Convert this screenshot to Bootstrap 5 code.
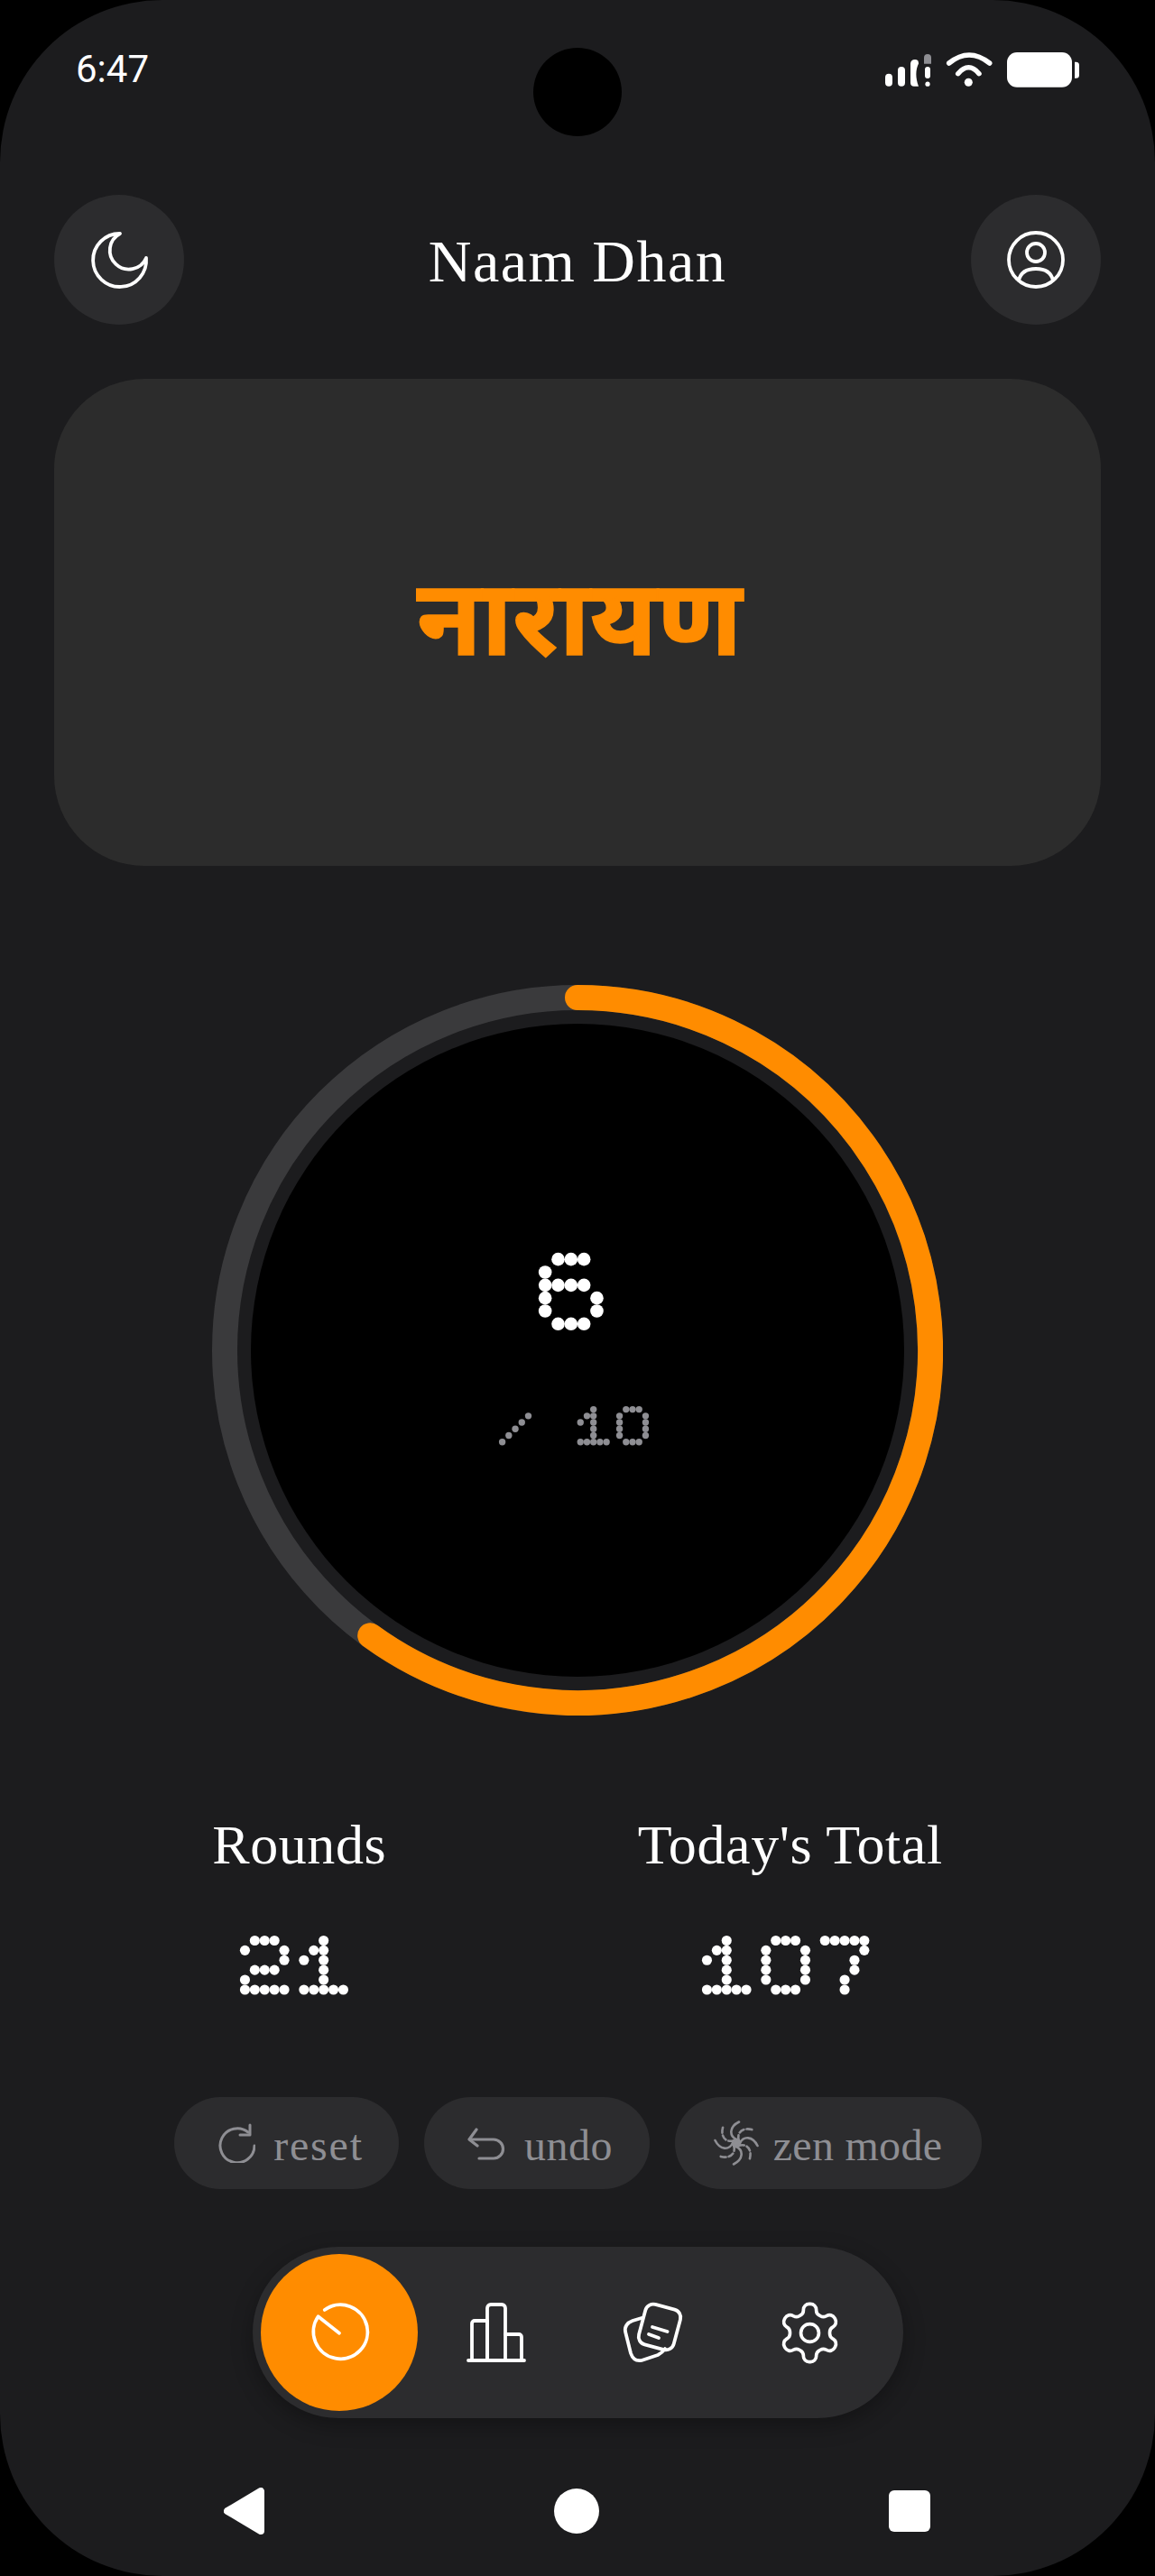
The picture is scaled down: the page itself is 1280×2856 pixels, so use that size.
<!doctype html>
<html lang="en">
<head>
<meta charset="utf-8">
<title>Naam Dhan</title>
<link href="https://cdn.jsdelivr.net/npm/bootstrap@5.3.0/dist/css/bootstrap.min.css" rel="stylesheet">
<style>
html,body{background:#000;margin:0;height:2856px;overflow:hidden}
.phone{width:1280px;height:2856px;background:#1c1c1e;border-radius:180px;color:#fff;font-family:"Liberation Serif","DejaVu Serif",serif}
.camera{position:absolute;left:591px;top:53px;width:98px;height:98px;border-radius:50%;background:#000}
.statusrow{height:216px;padding:50px 84px 0}
.clock{font:42px/54px Roboto,sans-serif;width:90px}
.status-icons{margin:8px -1px 0 0}
.head-row{padding:0 60px}
.roundbtn{width:144px;height:144px;background:#2c2c2e;border:0;padding:0}
.head-title{font-size:66px;line-height:72px;letter-spacing:1.5px;margin-top:3px}
.word-card{height:540px;margin:60px 60px 0;padding:0 0 19px 4px;background:#2c2c2c;border-radius:100px;color:#ff8c00;font-family:"Noto Sans","DejaVu Sans",sans-serif;font-size:117px;font-weight:700;-webkit-text-stroke:1.5px #ff8c00}
.dial{width:810px;height:810px;margin:132px auto 0}
.dial svg{display:block}
.dial-num{position:absolute;inset:0;padding-top:297px}
.dial-sub{margin-top:84px}
.stats{margin-top:109px;padding:0 96px}
.stat-label{font-size:62px;line-height:68px;letter-spacing:.6px}
.stat-val{margin-top:67px;height:66px}
.pills{margin-top:113px;gap:28px}
.pill-btn{height:102px;border-radius:51px;background:#2c2c2e;color:#8e8e93;font-size:48px;line-height:1;padding:0;border:0}
.pill-txt{padding-top:6px}
.w-reset{width:249px;gap:20px;letter-spacing:1.800px;padding-left:8px}.w-undo{width:250px;gap:19px;letter-spacing:.5px;padding-left:8px}.w-zen{width:340px;gap:16px;letter-spacing:.3px}
.dock{width:721px;height:190px;margin-top:64px;padding:10px 15px 10px 9px;background:#2c2c2e;border-radius:95px;box-shadow:0 8px 24px rgba(0,0,0,.3)}
.dock-item{width:174px;height:174px;flex:none}
.dock-active{background:#ff8c00}
.sysnav{height:175px}
.sys{position:absolute;display:block;fill:#fff}
.sys-back{left:248px;top:77px}
.sys-home{left:614px;top:78px}
.sys-recent{left:985px;top:80px}
svg.ic{fill:none;stroke:#fff;stroke-linecap:round;stroke-linejoin:round;overflow:visible}
svg.gi{fill:none;stroke:#8e8e93;stroke-linecap:round;stroke-linejoin:round;flex:none}
.dotval{display:inline-block;position:relative;font-family:"Liberation Mono",monospace;color:transparent;white-space:pre;fill:#fff}
.dotval svg{position:absolute;left:0;top:0;display:block;overflow:visible}
.dm-lg{font-size:143.300px;line-height:86px}
.dm-md{font-size:109px;line-height:65.400px}
.dm-sm{font-size:72.200px;line-height:43.300px;fill:#8e8e93}
</style>
</head>
<body>
<div class="phone d-flex flex-column position-relative overflow-hidden">
  <div class="camera"></div>

  <div class="statusrow d-flex justify-content-between align-items-start">
    <span class="clock">6:47</span>
    <svg class="status-icons" width="216" height="40" viewBox="0 0 216 40">
      <g fill="#fff">
        <rect x="0" y="23.700" width="8" height="14" rx="4"/>
        <rect x="14" y="16" width="8" height="21.700" rx="4"/>
        <path d="M33 8a4 4 0 0 1 4 4v.5c-3.500 7-3.500 16 0 25.200h-5c-2.500 0-4-1.500-4-4V12.500C28 10 30 8 33 8z"/>
        <rect x="44" y="16" width="6" height="13" rx="3"/>
        <circle cx="47" cy="35.200" r="2.600"/>
        <path d="M43 12.700V6a4 4 0 0 1 8 0v6.700z" fill="#8e8e93"/>
        <circle cx="92.300" cy="33.200" r="4.500"/>
      </g>
      <g fill="none" stroke="#fff" stroke-width="5.500" stroke-linecap="round">
        <path d="M70.700 12Q93-6 115.700 12"/>
        <path d="M80.700 23.700Q92.500 10 104 23.700"/>
      </g>
      <rect x="135" y="0" width="72" height="38.700" rx="11" fill="#fff"/>
      <path d="M210 10.700h1.500a3.500 3.500 0 0 1 3.500 3.500v11a3.500 3.500 0 0 1-3.500 3.500H210z" fill="#fff"/>
    </svg>
  </div>

  <header class="head-row d-flex justify-content-between align-items-center">
    <button class="roundbtn rounded-circle d-flex align-items-center justify-content-center" aria-label="theme">
      <svg class="ic" width="64" height="64" viewBox="0 0 64 64" stroke-width="3.800"><path d="M33 3A29.500 29.500 0 1 0 62 30 21 21 0 1 1 33 3z"/></svg>
    </button>
    <div class="head-title">Naam Dhan</div>
    <button class="roundbtn rounded-circle d-flex align-items-center justify-content-center" aria-label="profile">
      <svg class="ic" width="64" height="64" viewBox="0 0 64 64" stroke-width="3.800"><circle cx="32" cy="32" r="30"/><circle cx="32" cy="24" r="10"/><path d="M13 55c2-9 9-13 19-13s17 4 19 13"/></svg>
    </button>
  </header>

  <section class="word-card d-flex align-items-center justify-content-center">नारायण</section>

  <section class="dial position-relative">
    <svg width="810" height="810" viewBox="0 0 810 810">
      <circle cx="405" cy="405" r="391" fill="none" stroke="#3a3a3c" stroke-width="28"/>
      <circle cx="405" cy="405" r="362" fill="#000"/>
      <path d="M405 14A391 391 0 1 1 175.200 721.300" fill="none" stroke="#ff8c00" stroke-width="28" stroke-linecap="round"/>
    </svg>
    <div class="dial-num d-flex flex-column align-items-center">
      <span class="dotval dm-lg" data-pitch="14.330">6</span>
      <span class="dotval dm-sm dial-sub" data-pitch="7.220">/ 10</span>
    </div>
  </section>

  <section class="stats d-flex justify-content-around text-center">
    <div class="d-flex flex-column align-items-center">
      <div class="stat-label">Rounds</div>
      <div class="stat-val"><span class="dotval dm-md" data-pitch="10.900">21</span></div>
    </div>
    <div class="d-flex flex-column align-items-center">
      <div class="stat-label">Today's Total</div>
      <div class="stat-val"><span class="dotval dm-md" data-pitch="10.900">107</span></div>
    </div>
  </section>

  <section class="pills d-flex justify-content-center">
    <button class="pill-btn w-reset btn d-flex align-items-center justify-content-center">
      <svg class="gi" width="44" height="44" viewBox="0 0 44 44" stroke-width="3"><path d="M43 25A19 19 0 1 1 36 10"/><path d="M38 2V13H27"/></svg>
      <span class="pill-txt">reset</span>
    </button>
    <button class="pill-btn w-undo btn d-flex align-items-center justify-content-center">
      <svg class="gi" width="44" height="44" viewBox="0 0 44 44" stroke-width="3.200"><path d="M10 7L2 18l9 7"/><path d="M3 18H29a10.500 10.500 0 0 1 0 21H13"/></svg>
      <span class="pill-txt">undo</span>
    </button>
    <button class="pill-btn w-zen btn d-flex align-items-center justify-content-center">
      <svg class="gi" width="50" height="50" viewBox="0 0 50 50" stroke-width="2.600"><circle cx="25" cy="25" r="4" fill="#8e8e93"/>
        <path d="M25 21C17 17 17 7 28 1.500"/>
        <path d="M25 21C17 17 17 7 28 1.500" stroke-dasharray="6 3" transform="rotate(45 25 25)"/>
        <path d="M25 21C17 17 17 7 28 1.500" transform="rotate(90 25 25)"/>
        <path d="M25 21C17 17 17 7 28 1.500" stroke-dasharray="6 3" transform="rotate(135 25 25)"/>
        <path d="M25 21C17 17 17 7 28 1.500" transform="rotate(180 25 25)"/>
        <path d="M25 21C17 17 17 7 28 1.500" stroke-dasharray="6 3" transform="rotate(225 25 25)"/>
        <path d="M25 21C17 17 17 7 28 1.500" transform="rotate(270 25 25)"/>
        <path d="M25 21C17 17 17 7 28 1.500" stroke-dasharray="6 3" transform="rotate(315 25 25)"/>
      </svg>
      <span class="pill-txt">zen mode</span>
    </button>
  </section>

  <nav class="dock d-flex align-items-center mx-auto">
    <div class="dock-item dock-active rounded-circle d-flex align-items-center justify-content-center">
      <svg class="ic" width="66" height="66" viewBox="0 0 66 66" stroke-width="3.800"><path d="M16.700 8A30 30 0 1 1 9.600 15.300L33 33.700"/></svg>
    </div>
    <div class="dock-item d-flex align-items-center justify-content-center">
      <svg class="ic" width="66" height="66" viewBox="0 0 66 66" stroke-width="3.800"><path d="M2 64H64"/><path d="M6 64V23a3 3 0 0 1 3-3H23V64"/><path d="M23 64V6a4 4 0 0 1 4-4H39a4 4 0 0 1 4 4V64"/><path d="M43 35H58a3 3 0 0 1 3 3V64"/></svg>
    </div>
    <div class="dock-item d-flex align-items-center justify-content-center">
      <svg class="ic" width="66" height="66" viewBox="0 0 66 66" stroke-width="3.800"><rect x="20" y="4" width="40" height="46" rx="9" transform="rotate(15 40 27)"/><path d="M20 17L10 20C4 22 1 27 2 32L8 56C10 62 14 65 20 64L38 58C42 56 44 54 46 51"/><path d="M32 27L48.600 32"/><path d="M28 35L39 39"/></svg>
    </div>
    <div class="dock-item d-flex align-items-center justify-content-center">
      <svg class="ic" width="77" height="77" viewBox="0 0 24 24" stroke-width="1.150"><circle cx="12" cy="12" r="3.100"/><path d="M12.220 2h-.44a2 2 0 0 0-2 2v.18a2 2 0 0 1-1 1.730l-.43.25a2 2 0 0 1-2 0l-.15-.08a2 2 0 0 0-2.730.73l-.22.38a2 2 0 0 0 .73 2.730l.15.1a2 2 0 0 1 1 1.720v.51a2 2 0 0 1-1 1.740l-.15.09a2 2 0 0 0-.73 2.730l.22.38a2 2 0 0 0 2.730.73l.15-.08a2 2 0 0 1 2 0l.43.25a2 2 0 0 1 1 1.730V20a2 2 0 0 0 2 2h.44a2 2 0 0 0 2-2v-.18a2 2 0 0 1 1-1.730l.43-.25a2 2 0 0 1 2 0l.15.08a2 2 0 0 0 2.730-.73l.22-.39a2 2 0 0 0-.73-2.730l-.15-.08a2 2 0 0 1-1-1.740v-.5a2 2 0 0 1 1-1.740l.15-.09a2 2 0 0 0 .73-2.730l-.22-.38a2 2 0 0 0-2.730-.73l-.15.08a2 2 0 0 1-2 0l-.43-.25a2 2 0 0 1-1-1.730V4a2 2 0 0 0-2-2z"/></svg>
    </div>
  </nav>

  <div class="sysnav flex-grow-1 position-relative">
    <svg class="sys sys-back" width="46" height="52" viewBox="0 0 46 52"><path d="M4 26L41 4V48z" stroke="#fff" stroke-linejoin="round" stroke-width="8"/></svg>
    <svg class="sys sys-home" width="50" height="50" viewBox="0 0 50 50"><circle cx="25" cy="25" r="25"/></svg>
    <svg class="sys sys-recent" width="46" height="46" viewBox="0 0 46 46"><rect width="46" height="46" rx="6"/></svg>
  </div>
</div>

<script>
const GLYPHS={
 "6":[".XXX.","X....","XXXX.","X...X","X...X",".XXX."],
 "2":[".XXX.","X...X","....X",".XXX.","X....","XXXXX"],
 "1":["..X..",".XX..","X.X..","..X..","..X..","XXXXX"],
 "0":[".XXX.","X...X","X...X","X...X","X...X",".XXX."],
 "7":["XXXXX","....X","...X.","...X.","..X..","..X.."],
 "/":[".....","....X","...X.","..X..",".X...","X...."],
 " ":[".....",".....",".....",".....",".....","....."]
};
const NS='http://www.w3.org/2000/svg';
document.querySelectorAll('.dotval').forEach(function(el){
  const p=parseFloat(el.dataset.pitch),t=el.textContent;
  const svg=document.createElementNS(NS,'svg');
  svg.setAttribute('width',(t.length*6*p).toFixed(1));
  svg.setAttribute('height',(6*p).toFixed(1));
  svg.setAttribute('aria-hidden','true');
  [...t].forEach(function(ch,i){
    GLYPHS[ch].forEach(function(row,r){
      [...row].forEach(function(c,k){
        if(c==='X'){
          const d=document.createElementNS(NS,'circle');
          d.setAttribute('cx',((i*6+k+.5)*p).toFixed(2));
          d.setAttribute('cy',((r+.5)*p).toFixed(2));
          d.setAttribute('r',(p*.51).toFixed(2));
          svg.appendChild(d);
        }
      });
    });
  });
  el.appendChild(svg);
});
</script>
<script src="https://cdn.jsdelivr.net/npm/bootstrap@5.3.0/dist/js/bootstrap.bundle.min.js"></script>
</body>
</html>
